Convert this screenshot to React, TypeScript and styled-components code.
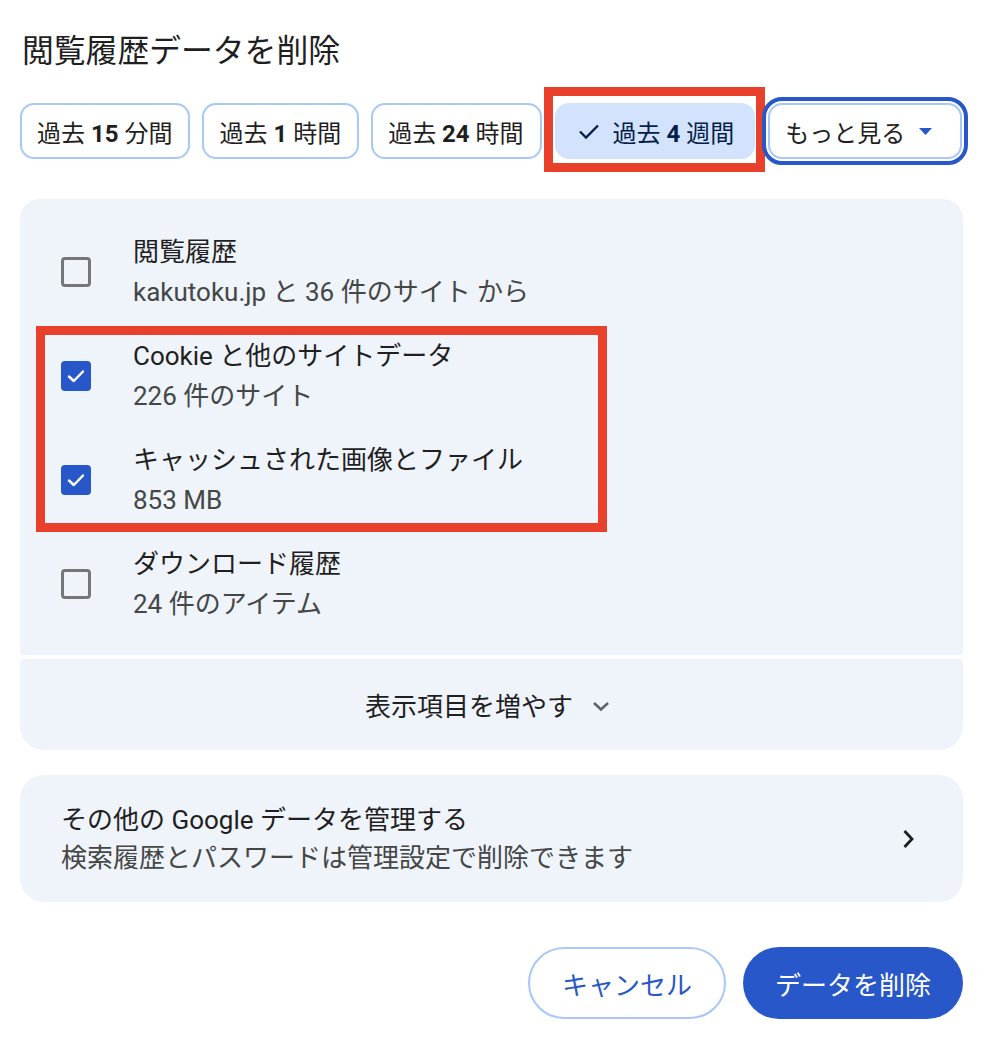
import React from 'react';
import styled, { createGlobalStyle } from 'styled-components';

const colors = {
  TEXT: '#1f1f1f',
  SEC_TEXT: '#444746',
  PRIMARY: '#2757c8',
  CHIP_BORDER: '#a8c7fa',
  CHIP_SELECTED: '#d3e3fd',
  ON_SELECTED: '#041e49',
  SURFACE: '#eff3fa',
  OUTLINE: '#747775',
  MARK: '#e8402b',
};

const GlobalStyle = createGlobalStyle`
  body {
    margin: 0;
    background: #fff;
    font-family: "Roboto", "Noto Sans CJK JP", sans-serif;
    color: ${colors.TEXT};
  }
`;

type RangeChip = { label: string; num: string; unit: string };

const ranges: RangeChip[] = [
  { label: '過去', num: '15', unit: '分間' },
  { label: '過去', num: '1', unit: '時間' },
  { label: '過去', num: '24', unit: '時間' },
];

type DataItem = { title: string; detail: string; checked: boolean };

const items: DataItem[] = [
  { title: '閲覧履歴', detail: 'kakutoku.jp と 36 件のサイト から', checked: false },
  { title: 'Cookie と他のサイトデータ', detail: '226 件のサイト', checked: true },
  { title: 'キャッシュされた画像とファイル', detail: '853 MB', checked: true },
  { title: 'ダウンロード履歴', detail: '24 件のアイテム', checked: false },
];

const CheckBox: React.FC<{ checked: boolean }> = ({ checked }) => (
  <Box checked={checked}>
    {checked && (
      <svg width="22" height="22" viewBox="0 0 22 22">
        <path d="M4 11.5 L8.8 16 L18 6.5" fill="none" stroke="#fff" strokeWidth="2.5" strokeLinecap="round" strokeLinejoin="round" />
      </svg>
    )}
  </Box>
);

const ItemRow: React.FC<{ item: DataItem }> = ({ item }) => (
  <Row>
    <CheckBox checked={item.checked} />
    <RowText>
      <RowTitle>{item.title}</RowTitle>
      <RowDetail>{item.detail}</RowDetail>
    </RowText>
  </Row>
);

const App: React.FC = () => {
  return (
    <Page>
      <GlobalStyle />
      <Title>閲覧履歴データを削除</Title>

      <Chips>
        {ranges.map((r) => (
          <Chip key={r.num}>
            <span>
              {r.label} <b>{r.num}</b> {r.unit}
            </span>
          </Chip>
        ))}
        <SelectedChip>
          <svg width="22" height="18" viewBox="0 0 22 18">
            <path d="M2 9.5 L8 15.5 L20 3.5" fill="none" stroke={colors.ON_SELECTED} strokeWidth="2.3" />
          </svg>
          <span>
            過去 <b>4</b> 週間
          </span>
          <Mark />
        </SelectedChip>
        <MoreChip>
          <span>もっと見る</span>
          <svg width="13" height="7" viewBox="0 0 13 7">
            <path d="M0 0 H13 L6.5 7 Z" fill={colors.PRIMARY} />
          </svg>
        </MoreChip>
      </Chips>

      <ItemsCard>
        <ItemRow item={items[0]} />
        <Highlight>
          <ItemRow item={items[1]} />
          <ItemRow item={items[2]} />
        </Highlight>
        <ItemRow item={items[3]} />
      </ItemsCard>

      <ExpandCard>
        <span>表示項目を増やす</span>
        <svg width="18" height="11" viewBox="0 0 18 11">
          <path d="M2 2 L9 8.5 L16 2" fill="none" stroke="#5f6368" strokeWidth="2.6" />
        </svg>
      </ExpandCard>

      <LinkCard>
        <div>
          <LinkTitle>その他の Google データを管理する</LinkTitle>
          <LinkDetail>検索履歴とパスワードは管理設定で削除できます</LinkDetail>
        </div>
        <svg width="12" height="20" viewBox="0 0 12 20">
          <path d="M2.5 2 L10 10 L2.5 18" fill="none" stroke={colors.TEXT} strokeWidth="2.8" />
        </svg>
      </LinkCard>

      <Actions>
        <CancelButton>キャンセル</CancelButton>
        <DeleteButton>データを削除</DeleteButton>
      </Actions>
    </Page>
  );
};

const Page = styled.div`
  padding: 31px 35px 20px 20px;
  display: flex;
  flex-direction: column;
`;

const Title = styled.h1`
  margin: 0 0 32px 2px;
  font-size: 31.8px;
  line-height: 40px;
  font-weight: 400;
  color: ${colors.TEXT};
`;

const Chips = styled.div`
  display: flex;
  gap: 12px;
  margin-bottom: 40px;
`;

const ChipBase = styled.button`
  position: relative;
  flex-shrink: 0;
  height: 56px;
  box-sizing: border-box;
  display: flex;
  align-items: center;
  border-radius: 14px;
  font-family: inherit;
  font-size: 24px;
  white-space: pre;
  background: #fff;
  color: ${colors.TEXT};
  border: 2px solid ${colors.CHIP_BORDER};

  b {
    font-weight: 700;
  }

  svg {
    flex-shrink: 0;
  }
`;

const Chip = styled(ChipBase)`
  padding: 0 16px 0 15px;
`;

const SelectedChip = styled(ChipBase)`
  padding: 0 19px 0 21px;
  gap: 13px;
  background: ${colors.CHIP_SELECTED};
  border-color: ${colors.CHIP_SELECTED};
  color: ${colors.ON_SELECTED};
  margin-left: 1px;
`;

const MoreChip = styled(ChipBase)`
  padding: 0 28px 0 15px;
  margin-left: 1px;
  outline: 4px solid ${colors.PRIMARY};
  outline-offset: 2px;
  width: 194px;
  justify-content: space-between;
`;

const Mark = styled.span`
  position: absolute;
  top: -18px;
  bottom: -15px;
  left: -13px;
  right: -12px;
  border: 9px solid ${colors.MARK};
  pointer-events: none;
`;

const Card = styled.div`
  background: ${colors.SURFACE};
`;

const ItemsCard = styled(Card)`
  border-radius: 20px 20px 4px 4px;
  padding: 21px 0 19px;
`;

const Highlight = styled.div`
  position: relative;

  &::after {
    content: '';
    position: absolute;
    top: 2px;
    bottom: 0;
    left: 16px;
    width: 571px;
    box-sizing: border-box;
    border: 9px solid ${colors.MARK};
    pointer-events: none;
  }
`;

const Row = styled.div`
  display: flex;
  align-items: center;
  gap: 42px;
  padding: 12px 0 12px 41px;
`;

const Box = styled.div<{ checked: boolean }>`
  width: 30px;
  height: 30px;
  flex-shrink: 0;
  box-sizing: border-box;
  border-radius: 4px;
  display: flex;
  align-items: center;
  justify-content: center;
  border: ${({ checked }) => (checked ? 'none' : `3px solid ${colors.OUTLINE}`)};
  background: ${({ checked }) => (checked ? colors.PRIMARY : 'transparent')};
`;

const RowText = styled.div`
  display: flex;
  flex-direction: column;
  font-size: 26px;
  line-height: 40px;
`;

const RowTitle = styled.div`
  color: ${colors.TEXT};
`;

const RowDetail = styled.div`
  color: ${colors.SEC_TEXT};
`;

const ExpandCard = styled(Card)`
  margin-top: 4px;
  height: 91px;
  border-radius: 4px 4px 24px 24px;
  display: flex;
  align-items: center;
  justify-content: center;
  gap: 19px;
  font-size: 26px;
  color: ${colors.TEXT};
  padding-right: 8px;

  svg {
    margin-top: 4px;
  }
`;

const LinkCard = styled(Card)`
  margin-top: 25px;
  border-radius: 24px;
  padding: 26px 49px 25px 41px;
  display: flex;
  align-items: center;
  justify-content: space-between;
  font-size: 26px;
  line-height: 38px;
`;

const LinkTitle = styled.div`
  color: ${colors.TEXT};
`;

const LinkDetail = styled.div`
  color: ${colors.SEC_TEXT};
`;

const Actions = styled.div`
  display: flex;
  justify-content: flex-end;
  gap: 17px;
  margin-top: 45px;
`;

const ButtonBase = styled.button`
  height: 72px;
  border-radius: 36px;
  font-family: inherit;
  font-size: 26px;
  padding: 0 32px;
  cursor: pointer;
`;

const CancelButton = styled(ButtonBase)`
  background: #fff;
  color: ${colors.PRIMARY};
  border: 2px solid ${colors.CHIP_BORDER};
`;

const DeleteButton = styled(ButtonBase)`
  background: ${colors.PRIMARY};
  color: #fff;
  border: none;
`;

export default App;
